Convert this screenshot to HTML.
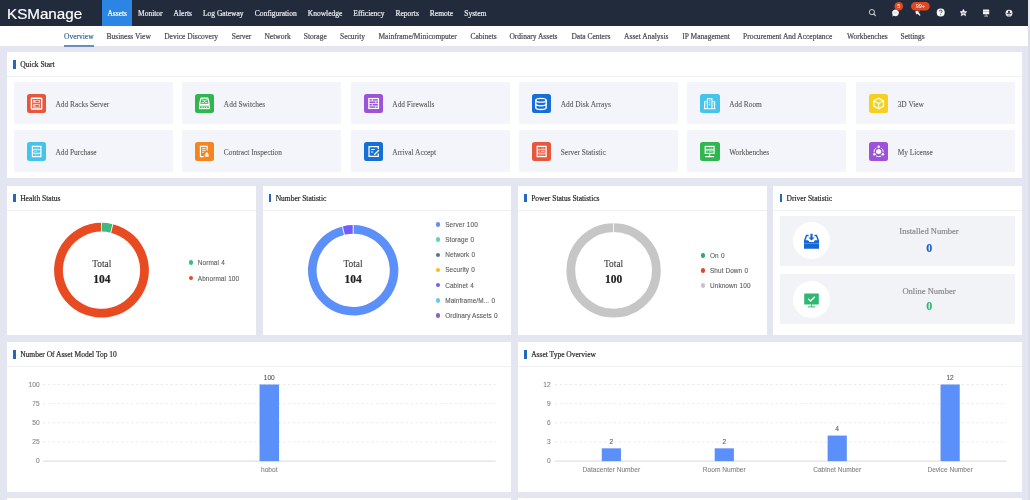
<!DOCTYPE html>
<html><head><meta charset="utf-8">
<style>
*{box-sizing:border-box;margin:0;padding:0}
html,body{width:1030px;height:500px;overflow:hidden;background:#e3e5f0;font-family:"Liberation Serif",serif}
.abs{position:absolute}
#hdr{position:absolute;left:0;top:0;width:1030px;height:26px;background:#212b3c}
#logo{position:absolute;left:7px;top:1px;height:26px;line-height:26px;font-family:"Liberation Sans",sans-serif;font-size:15.2px;color:#fff;letter-spacing:0}
#nav{position:absolute;left:102px;top:0;height:26px;display:flex}
#nav span{display:block;height:26px;line-height:27.6px;padding:0 5.52px;font-size:7.5px;color:#e9ecf2}
#nav span.on{background:#2a86e2;color:#fff;padding:0 5.1px 0 5.4px;margin-right:0.4px}
#sub{position:absolute;left:0;top:26px;width:1030px;height:20px;background:#fff}
#subnav{position:absolute;left:0;top:0;height:20px;width:1030px}
#subnav span{position:absolute;top:0;white-space:nowrap;height:20px;line-height:21.6px;font-size:7.5px;color:#4a4a4a}
#subnav span.on{color:#3a6e9e}
#subnav span.on:after{content:"";position:absolute;left:0;right:0;top:18.9px;height:2.2px;background:#6890bc}
.panel{position:absolute;background:#fff}
.ph{position:absolute;left:0;top:0;right:0;height:25px;border-bottom:1px solid #f0f0f3}
.ph i{position:absolute;left:6.3px;top:8px;width:2.3px;height:8.6px;background:#2468bd}
.ph b{position:absolute;left:13.2px;top:1px;height:24px;line-height:24px;font-weight:normal;font-size:7.5px;color:#2a2a2a}
.card{position:absolute;background:#f4f5fa;width:159px;height:41.4px}
.card .ic{position:absolute;left:13.1px;top:11.5px;width:19.3px;height:19px;border-radius:2.5px}
.card .ic svg{position:absolute;left:0;top:0;width:19.3px;height:19px}
.card .t{position:absolute;left:41.8px;top:1.4px;height:41.4px;line-height:41.4px;font-size:7.4px;color:#5a5a5a;white-space:nowrap;-webkit-text-stroke-width:0.1px}
.lg{position:absolute;font-family:"Liberation Sans",sans-serif;font-size:6.45px;letter-spacing:0.08px;color:#5c5c5c;-webkit-text-stroke-width:0.1px;white-space:nowrap;height:10px;line-height:10px}
.lg i{position:absolute;left:-9.3px;top:2.3px;width:4.6px;height:4.6px;border-radius:50%}
.ctr{position:absolute;text-align:center;width:60px}
.ctr .a{font-size:9.4px;color:#3a3a3a;-webkit-text-stroke-width:0.1px;line-height:12px;height:12px}
.ctr .b{font-size:11.5px;color:#222;font-weight:bold;line-height:14px;height:14px;margin-top:2px}
.ax{position:absolute;font-family:"Liberation Sans",sans-serif;font-size:6.6px;color:#858585;-webkit-text-stroke-width:0.1px;white-space:nowrap;line-height:8px;height:8px}
.dc{position:absolute;background:#f2f3f7;width:234.8px;height:49.7px}
.dc .circ{position:absolute;left:13px;top:6.2px;width:37.2px;height:37.2px;border-radius:50%;background:#fff}
.dc .lbl{position:absolute;left:63.6px;right:0;text-align:center;font-size:8.5px;color:#8a8a8a;line-height:10px;height:10px}
.dc .num{position:absolute;left:64px;right:0;text-align:center;font-size:12px;line-height:12px;height:12px;font-weight:bold}
</style></head><body><div id="root" style="position:absolute;left:0;top:0;width:1030px;height:500px;will-change:transform;-webkit-text-stroke-width:0.2px">
<div id="hdr">
  <div id="logo">KSManage</div>
  <div id="nav"><span class="on">Assets</span><span>Monitor</span><span>Alerts</span><span>Log Gateway</span><span>Configuration</span><span>Knowledge</span><span>Efficiency</span><span>Reports</span><span>Remote</span><span>System</span></div>
  <svg class="abs" style="left:860px;top:0" width="170" height="26" viewBox="860 0 170 26">
<circle cx="871.9" cy="12.1" r="2.6" fill="none" stroke="#d0d4dc" stroke-width="0.95"/><path d="M873.8 14L875.4 15.6" stroke="#d0d4dc" stroke-width="1.1" stroke-linecap="round"/>
<path d="M895.5 9.4C897.4 9.4 898.9 10.9 898.9 12.8C898.9 14.7 897.4 16.2 895.5 16.2C894.9 16.2 894.4 16.1 893.9 15.8L892.3 16.4L892.7 15C892.3 14.4 892.1 13.6 892.1 12.8C892.1 10.9 893.6 9.4 895.5 9.4Z" fill="#f4f4f6"/>
<circle cx="894.2" cy="12.8" r="0.4" fill="#8a8f99"/><circle cx="895.5" cy="12.8" r="0.4" fill="#8a8f99"/><circle cx="896.8" cy="12.8" r="0.4" fill="#8a8f99"/>
<path d="M915.3 11.2L917.6 10.6L920.6 15.2L919.6 15.8L917.4 13.8L916.2 14.4Z" fill="#f0f0f4"/><path d="M918.6 11.4L919.8 10.8" stroke="#f0f0f4" stroke-width="0.6"/>
<circle cx="940.7" cy="12.6" r="4" fill="#fff"/>
<path d="M939.3 11.4C939.3 10.6 939.9 10.1 940.7 10.1C941.5 10.1 942.1 10.6 942.1 11.3C942.1 12.2 940.8 12.3 940.8 13.3" fill="none" stroke="#202a3a" stroke-width="0.9"/><circle cx="940.8" cy="14.7" r="0.55" fill="#202a3a"/>
<path d="M963.4 9.2L964.5 11.4L966.8 11.7L965.1 13.3L965.6 15.8L963.4 14.6L961.2 15.8L961.7 13.3L960 11.7L962.3 11.4Z" fill="#fff" stroke="#fff" stroke-width="0.5" stroke-linejoin="round"/><rect x="962" y="12.6" width="2.8" height="0.8" fill="#212b3c"/>
<rect x="983" y="9.6" width="6.2" height="4.6" rx="0.3" fill="#f2f2f5"/><rect x="983" y="11" width="6.2" height="0.45" fill="#212b3c" opacity="0.5"/><rect x="985.7" y="14.2" width="0.8" height="1.5" fill="#e8e8ee"/><rect x="984.2" y="15.7" width="3.8" height="0.8" fill="#d8d8e0"/>
<circle cx="1009" cy="13.2" r="3.4" fill="#f4f4f6"/><circle cx="1009" cy="11.9" r="1.1" fill="#212b3c"/><rect x="1006.6" y="13.2" width="4.8" height="0.9" fill="#212b3c"/><path d="M1007.6 14.8H1010.4V15.6H1007.6Z" fill="#212b3c" opacity="0.6"/>
<circle cx="898.8" cy="6.3" r="4.3" fill="#e5461f"/>
<rect x="911.1" y="2.1" width="18.6" height="8.5" rx="4.25" fill="#e5461f"/>
</svg>
<div class="abs" style="left:894.5px;top:2.1px;width:8.6px;height:8.6px;line-height:8.6px;text-align:center;font-family:'Liberation Sans',sans-serif;font-size:5.6px;color:#fff;-webkit-text-stroke-width:0">5</div>
<div class="abs" style="left:911.1px;top:2.1px;width:18.6px;height:8.5px;line-height:8.5px;text-align:center;font-family:'Liberation Sans',sans-serif;font-size:5.6px;color:#fff;-webkit-text-stroke-width:0">99+</div>

</div>
<div id="sub">
  <div id="subnav"><span class="on" style="left:64px">Overview</span><span style="left:106.6px">Business View</span><span style="left:164.20000000000002px">Device Discovery</span><span style="left:231.8px">Server</span><span style="left:264.40000000000003px">Network</span><span style="left:303.8px">Storage</span><span style="left:340.0px">Security</span><span style="left:378.40000000000003px">Mainframe/Minicomputer</span><span style="left:470.40000000000003px">Cabinets</span><span style="left:509.40000000000003px">Ordinary Assets</span><span style="left:571.4px">Data Centers</span><span style="left:624.0999999999999px">Asset Analysis</span><span style="left:682.3px">IP Management</span><span style="left:743.0999999999999px">Procurement And Acceptance</span><span style="left:847.0px">Workbenches</span><span style="left:900.5999999999999px">Settings</span></div>
</div>

<!-- Quick Start -->
<div class="panel" style="left:7px;top:52.2px;width:1015.4px;height:125.6px">
  <div class="ph" style="height:24.4px"><i style="top:8.3px"></i><b style="height:23.6px;line-height:23.6px">Quick Start</b></div>
  <div class="card" style="left:6.6px;top:30.2px"><div class="ic" style="background:#e8563b"><svg viewBox="0 0 20 20" preserveAspectRatio="none"><rect x="4.6" y="4.4" width="10.6" height="11.4" rx="0.6" fill="none" stroke="#fff" stroke-width="1.5"/>
<rect x="6.9" y="6.6" width="6" height="2.6" fill="none" stroke="#fff" stroke-width="0.8" opacity="0.9"/>
<rect x="6.9" y="11.2" width="6" height="2.6" fill="none" stroke="#fff" stroke-width="0.8" opacity="0.9"/>
<rect x="7.4" y="7.3" width="1.3" height="1.2" fill="#fff"/><rect x="7.4" y="11.9" width="1.3" height="1.2" fill="#fff"/></svg></div><div class="t">Add Racks Server</div></div>
<div class="card" style="left:175.05px;top:30.2px"><div class="ic" style="background:#2fb64f"><svg viewBox="0 0 20 20" preserveAspectRatio="none"><path d="M6.2 4.4H13.3L14.8 11H4.7Z" fill="none" stroke="#fff" stroke-width="1.25" stroke-linejoin="round"/>
<rect x="4.7" y="12.4" width="10.1" height="3" fill="none" stroke="#fff" stroke-width="1.15"/>
<path d="M6.9 6.3H9L10.8 8.9H12.8M6.9 8.9H9L10.8 6.3H12.8" fill="none" stroke="#fff" stroke-width="0.9"/>
<rect x="6.6" y="13.4" width="1.5" height="1" fill="#fff"/><rect x="9" y="13.4" width="1.5" height="1" fill="#fff"/><rect x="11.4" y="13.4" width="1.5" height="1" fill="#fff"/></svg></div><div class="t">Add Switches</div></div>
<div class="card" style="left:343.5px;top:30.2px"><div class="ic" style="background:#9c53d8"><svg viewBox="0 0 20 20" preserveAspectRatio="none"><rect x="5" y="4.8" width="10" height="10.4" fill="none" stroke="#fff" stroke-width="1.3"/>
<path d="M5 7.4H15M5 10H15M5 12.6H15M8.6 4.8V7.4M12.2 7.4V10M8.6 10V12.6M12.2 12.6V15.2" fill="none" stroke="#fff" stroke-width="0.8"/></svg></div><div class="t">Add Firewalls</div></div>
<div class="card" style="left:511.95px;top:30.2px"><div class="ic" style="background:#166fd6"><svg viewBox="0 0 20 20" preserveAspectRatio="none"><ellipse cx="9.3" cy="6.6" rx="5.4" ry="2" fill="none" stroke="#fff" stroke-width="1.45"/>
<path d="M3.9 6.6V14.2C3.9 15.4 6.3 16.3 9.3 16.3S14.7 15.4 14.7 14.2V6.6M3.9 10.3C3.9 11.5 6.3 12.4 9.3 12.4S14.7 11.5 14.7 10.3" fill="none" stroke="#fff" stroke-width="1.45"/></svg></div><div class="t">Add Disk Arrays</div></div>
<div class="card" style="left:680.4px;top:30.2px"><div class="ic" style="background:#45c3ea"><svg viewBox="0 0 20 20" preserveAspectRatio="none"><path d="M7.6 15.4V5H12.4V15.4M4.8 15.4V8H7.6M12.4 8H15.2V15.4M4 15.6H16" fill="none" stroke="#fff" stroke-width="1.1"/>
<path d="M9.2 7H10.8M9.2 9.2H10.8M9.2 11.4H10.8M6 10H6.6M6 12H6.6M13.4 10H14M13.4 12H14" stroke="#fff" stroke-width="0.9"/></svg></div><div class="t">Add Room</div></div>
<div class="card" style="left:848.85px;top:30.2px"><div class="ic" style="background:#f5d11d"><svg viewBox="0 0 20 20" preserveAspectRatio="none"><path d="M10 4.4L15 7.2V12.8L10 15.6L5 12.8V7.2Z" fill="none" stroke="#fff" stroke-width="1.3" stroke-linejoin="round"/>
<path d="M5.2 7.3L10 10L14.8 7.3M10 10V15.4" fill="none" stroke="#fff" stroke-width="1.1"/></svg></div><div class="t">3D View</div></div>
<div class="card" style="left:6.6px;top:78px"><div class="ic" style="background:#45c3ea"><svg viewBox="0 0 20 20" preserveAspectRatio="none"><rect x="5.6" y="4.6" width="8.8" height="10.8" fill="none" stroke="#fff" stroke-width="1.3"/>
<path d="M5.6 8.2H14.4M5.6 11.8H14.4" stroke="#fff" stroke-width="1"/>
<path d="M7.4 6.4H12.6M7.4 10H10.6M7.4 13.6H12.6" stroke="#fff" stroke-width="0.7" opacity="0.6"/></svg></div><div class="t">Add Purchase</div></div>
<div class="card" style="left:175.05px;top:78px"><div class="ic" style="background:#f6851f"><svg viewBox="0 0 20 20" preserveAspectRatio="none"><path d="M12.6 9V4.6H5.6V15.4H9" fill="none" stroke="#fff" stroke-width="1.2"/>
<path d="M7.4 6.8H11M7.4 8.8H11M7.4 10.8H9" stroke="#fff" stroke-width="0.9"/>
<path d="M10.2 15.4V13.2L11.2 12.2C11 11.4 11.5 10.8 12.2 10.8S13.4 11.4 13.2 12.2L14.2 13.2V15.4Z" fill="#fff" opacity="0.95"/></svg></div><div class="t">Contract Inspection</div></div>
<div class="card" style="left:343.5px;top:78px"><div class="ic" style="background:#166fd6"><svg viewBox="0 0 20 20" preserveAspectRatio="none"><path d="M14.8 7.4V4.8H5.2V15.2H14.8V12.2" fill="none" stroke="#fff" stroke-width="1.3"/>
<path d="M7.2 8H11.2M7.2 10.6H9.6" stroke="#fff" stroke-width="1.1"/>
<path d="M10.6 13.4L15.6 8.4" stroke="#fff" stroke-width="1.2"/></svg></div><div class="t">Arrival Accept</div></div>
<div class="card" style="left:511.95px;top:78px"><div class="ic" style="background:#e8563b"><svg viewBox="0 0 20 20" preserveAspectRatio="none"><rect x="5.4" y="4.6" width="9.2" height="10.8" fill="none" stroke="#fff" stroke-width="1.3"/>
<path d="M5.4 8.2H14.6M5.4 11.8H14.6" stroke="#fff" stroke-width="0.9"/>
<path d="M7 6.4H8M9.2 6.4H13M7 10H8M9.2 10H13M7 13.6H13" stroke="#fff" stroke-width="0.8" opacity="0.7"/></svg></div><div class="t">Server Statistic</div></div>
<div class="card" style="left:680.4px;top:78px"><div class="ic" style="background:#2fb64f"><svg viewBox="0 0 20 20" preserveAspectRatio="none"><rect x="5.4" y="4.6" width="9.2" height="7.4" fill="none" stroke="#fff" stroke-width="1.2"/>
<path d="M5.4 8.3H14.6M10 12V15.2M5.4 15.4H14.6" stroke="#fff" stroke-width="1.1"/>
<path d="M7 6.4H8M9.2 6.4H13M7 10.2H8M9.2 10.2H13" stroke="#fff" stroke-width="0.8" opacity="0.7"/></svg></div><div class="t">Workbenches</div></div>
<div class="card" style="left:848.85px;top:78px"><div class="ic" style="background:#9c53d8"><svg viewBox="0 0 20 20" preserveAspectRatio="none"><path d="M10 7.2L12.6 8.6V11.6L10 13L7.4 11.6V8.6Z" fill="#fff"/>
<circle cx="10" cy="5" r="1.3" fill="#fff"/><circle cx="5.6" cy="12.8" r="1.3" fill="#fff"/><circle cx="14.4" cy="12.8" r="1.3" fill="#fff"/>
<path d="M7.6 6.2C6 7.2 5.2 8.8 5.3 10.8M12.4 6.2C14 7.2 14.8 8.8 14.7 10.8M7.2 14.6C8.8 15.6 11.2 15.6 12.8 14.6" fill="none" stroke="#fff" stroke-width="1"/></svg></div><div class="t">My License</div></div>

</div>

<!-- Row 2 -->
<div class="panel" style="left:7px;top:185.7px;width:248.6px;height:149.5px">
  <div class="ph"><i></i><b>Health Status</b></div>
</div>
<div class="panel" style="left:262.5px;top:185.7px;width:248.7px;height:149.5px">
  <div class="ph"><i></i><b>Number Statistic</b></div>
</div>
<div class="panel" style="left:518px;top:185.7px;width:248.7px;height:149.5px">
  <div class="ph"><i></i><b>Power Status Statistics</b></div>
</div>
<div class="panel" style="left:773.3px;top:185.7px;width:248.7px;height:149.5px">
  <div class="ph"><i></i><b>Driver Statistic</b></div>
</div>

<!-- Row 3 -->
<div class="panel" style="left:7px;top:342px;width:504.2px;height:149.6px">
  <div class="ph"><i></i><b>Number Of Asset Model Top 10</b></div>
</div>
<div class="panel" style="left:518px;top:342px;width:504px;height:149.6px">
  <div class="ph"><i></i><b>Asset Type Overview</b></div>
</div>

<!-- Row 4 -->
<div class="panel" style="left:7px;top:497.6px;width:504.2px;height:20px"></div>
<div class="panel" style="left:518px;top:497.6px;width:504px;height:20px"></div>

<svg class="abs" style="left:0;top:0" width="1030" height="500"><path d="M101.5 222.8A47.4 47.4 0 0 1 112.84 224.18L110.74 232.72A38.6 38.6 0 0 0 101.5 231.6Z" fill="#3dbb7e"/><path d="M112.84 224.18A47.4 47.4 0 1 1 101.5 222.8L101.5 231.6A38.6 38.6 0 1 0 110.74 232.72Z" fill="#e84b22"/><line x1="101.5" y1="232.6" x2="101.5" y2="221.8" stroke="#fff" stroke-width="0.9"/><line x1="110.5" y1="233.69" x2="113.08" y2="223.21" stroke="#fff" stroke-width="0.9"/><path d="M353.2 225.1A45.2 45.2 0 1 1 342.38 226.41L344.44 234.76A36.6 36.6 0 1 0 353.2 233.7Z" fill="#5b8ff9"/><path d="M342.38 226.41A45.2 45.2 0 0 1 353.2 225.1L353.2 233.7A36.6 36.6 0 0 0 344.44 234.76Z" fill="#6f5ef9"/><line x1="353.2" y1="234.7" x2="353.2" y2="224.1" stroke="#fff" stroke-width="0.9"/><line x1="344.68" y1="235.73" x2="342.14" y2="225.44" stroke="#fff" stroke-width="0.9"/><circle cx="613.6" cy="270.4" r="42.8" fill="none" stroke="#c6c6c6" stroke-width="8.8"/><line x1="613.6" y1="233" x2="613.6" y2="222.2" stroke="#fff" stroke-width="0.9"/></svg><div class="ctr" style="left:71.8px;top:257.5px"><div class="a">Total</div><div class="b">104</div></div><div class="ctr" style="left:323px;top:257.5px"><div class="a">Total</div><div class="b">104</div></div><div class="ctr" style="left:583.6px;top:257.5px"><div class="a">Total</div><div class="b">100</div></div><div class="lg" style="left:197.8px;top:258.1px"><i style="background:#3dbb7e"></i>Normal<span style="margin-left:2.2px">4</span></div><div class="lg" style="left:197.8px;top:273.5px"><i style="background:#e8491f"></i>Abnormal<span style="margin-left:2.2px">100</span></div><div class="lg" style="left:445.2px;top:220px"><i style="background:#5b8ff9"></i>Server<span style="margin-left:2.2px">100</span></div><div class="lg" style="left:445.2px;top:235.13px"><i style="background:#5ad8a6"></i>Storage<span style="margin-left:2.2px">0</span></div><div class="lg" style="left:445.2px;top:250.26px"><i style="background:#5d7092"></i>Network<span style="margin-left:2.2px">0</span></div><div class="lg" style="left:445.2px;top:265.39px"><i style="background:#f6bd16"></i>Security<span style="margin-left:2.2px">0</span></div><div class="lg" style="left:445.2px;top:280.52px"><i style="background:#6f5ef9"></i>Cabinet<span style="margin-left:2.2px">4</span></div><div class="lg" style="left:445.2px;top:295.65px"><i style="background:#6dc8ec"></i>Mainframe/M...<span style="margin-left:2.2px">0</span></div><div class="lg" style="left:445.2px;top:310.78px"><i style="background:#945fb9"></i>Ordinary Assets<span style="margin-left:2.2px">0</span></div><div class="lg" style="left:710px;top:250.7px"><i style="background:#2eaa6a"></i>On<span style="margin-left:2.2px">0</span></div><div class="lg" style="left:710px;top:265.7px"><i style="background:#e0452c"></i>Shut Down<span style="margin-left:2.2px">0</span></div><div class="lg" style="left:710px;top:281.2px"><i style="background:#c6c6c6"></i>Unknown<span style="margin-left:2.2px">100</span></div><div class="dc" style="left:779.8px;top:216px"><div class="circ"></div>
<svg class="abs" style="left:23px;top:16.8px" width="17" height="17" viewBox="0 0 17 17">
<path d="M1 7.2L3 1.8H5.6V3.2H4L2.6 7.2H5.2L6.2 9H10.8L11.8 7.2H14.4L13 3.2H11.4V1.8H14L16 7.2V15.8H1Z" fill="#1667d6"/>
<path d="M7.4 0.8H9.6V4.4H11.6L8.5 7.6L5.4 4.4H7.4Z" fill="#1667d6"/>
<rect x="1" y="10.4" width="15" height="0.5" fill="#fff" opacity="0.5"/>
</svg>
<div class="lbl" style="top:10.4px">Installed Number</div><div class="num" style="top:26.2px;color:#2067c8">0</div></div>
<div class="dc" style="left:779.8px;top:274.4px"><div class="circ"></div>
<svg class="abs" style="left:23px;top:17.6px" width="17" height="17" viewBox="0 0 17 17">
<rect x="1.2" y="1.4" width="14.6" height="11" rx="0.6" fill="#2fb872"/>
<path d="M5.2 6.8L7.6 9L11.8 4.8" fill="none" stroke="#fff" stroke-width="1.3"/>
<rect x="8" y="12.4" width="1" height="2.2" fill="#2fb872"/><rect x="5" y="14.4" width="7" height="1" fill="#2fb872"/>
</svg>
<div class="lbl" style="top:11.2px">Online Number</div><div class="num" style="top:25.8px;color:#3bb57a">0</div></div>
<svg class="abs" style="left:0;top:0" width="1030" height="500"><line x1="43" y1="461.1" x2="495.6" y2="461.1" stroke="#cfcfcf" stroke-width="0.8"/><line x1="43" y1="441.95" x2="495.6" y2="441.95" stroke="#dedede" stroke-width="0.6" stroke-dasharray="2.4 2.5"/><line x1="43" y1="422.8" x2="495.6" y2="422.8" stroke="#dedede" stroke-width="0.6" stroke-dasharray="2.4 2.5"/><line x1="43" y1="403.65" x2="495.6" y2="403.65" stroke="#dedede" stroke-width="0.6" stroke-dasharray="2.4 2.5"/><line x1="43" y1="384.5" x2="495.6" y2="384.5" stroke="#dedede" stroke-width="0.6" stroke-dasharray="2.4 2.5"/><rect x="259.55" y="384.5" width="19.5" height="76.6" fill="#5b8ff9"/></svg><div class="ax" style="left:-0.4px;width:40px;text-align:right;top:457.1px">0</div><div class="ax" style="left:-0.4px;width:40px;text-align:right;top:437.95px">25</div><div class="ax" style="left:-0.4px;width:40px;text-align:right;top:418.8px">50</div><div class="ax" style="left:-0.4px;width:40px;text-align:right;top:399.65px">75</div><div class="ax" style="left:-0.4px;width:40px;text-align:right;top:380.5px">100</div><div class="ax" style="left:219.3px;width:100px;text-align:center;top:465.7px">hobot</div><div class="ax" style="left:219.3px;width:100px;text-align:center;top:373.7px;color:#595959">100</div><svg class="abs" style="left:0;top:0" width="1030" height="500"><line x1="554.9" y1="461.1" x2="1006.6" y2="461.1" stroke="#cfcfcf" stroke-width="0.8"/><line x1="554.9" y1="441.95" x2="1006.6" y2="441.95" stroke="#dedede" stroke-width="0.6" stroke-dasharray="2.4 2.5"/><line x1="554.9" y1="422.8" x2="1006.6" y2="422.8" stroke="#dedede" stroke-width="0.6" stroke-dasharray="2.4 2.5"/><line x1="554.9" y1="403.65" x2="1006.6" y2="403.65" stroke="#dedede" stroke-width="0.6" stroke-dasharray="2.4 2.5"/><line x1="554.9" y1="384.5" x2="1006.6" y2="384.5" stroke="#dedede" stroke-width="0.6" stroke-dasharray="2.4 2.5"/><rect x="601.76" y="448.33" width="19.2" height="12.77" fill="#5b8ff9"/><rect x="714.69" y="448.33" width="19.2" height="12.77" fill="#5b8ff9"/><rect x="827.61" y="435.57" width="19.2" height="25.53" fill="#5b8ff9"/><rect x="940.54" y="384.5" width="19.2" height="76.6" fill="#5b8ff9"/></svg><div class="ax" style="left:510.7px;width:40px;text-align:right;top:457.1px">0</div><div class="ax" style="left:510.7px;width:40px;text-align:right;top:437.95px">3</div><div class="ax" style="left:510.7px;width:40px;text-align:right;top:418.8px">6</div><div class="ax" style="left:510.7px;width:40px;text-align:right;top:399.65px">9</div><div class="ax" style="left:510.7px;width:40px;text-align:right;top:380.5px">12</div><div class="ax" style="left:561.36px;width:100px;text-align:center;top:465.7px">Datacenter Number</div><div class="ax" style="left:561.36px;width:100px;text-align:center;top:437.53px;color:#595959">2</div><div class="ax" style="left:674.29px;width:100px;text-align:center;top:465.7px">Room Number</div><div class="ax" style="left:674.29px;width:100px;text-align:center;top:437.53px;color:#595959">2</div><div class="ax" style="left:787.21px;width:100px;text-align:center;top:465.7px">Cabinet Number</div><div class="ax" style="left:787.21px;width:100px;text-align:center;top:424.77px;color:#595959">4</div><div class="ax" style="left:900.14px;width:100px;text-align:center;top:465.7px">Device Number</div><div class="ax" style="left:900.14px;width:100px;text-align:center;top:373.7px;color:#595959">12</div>
<div class="abs" style="left:1028.4px;top:0;width:1.6px;height:26px;background:#e9e9ee"></div><div class="abs" style="left:1028.4px;top:26px;width:1.6px;height:474px;background:#dcdde7"></div>
</div></body></html>
